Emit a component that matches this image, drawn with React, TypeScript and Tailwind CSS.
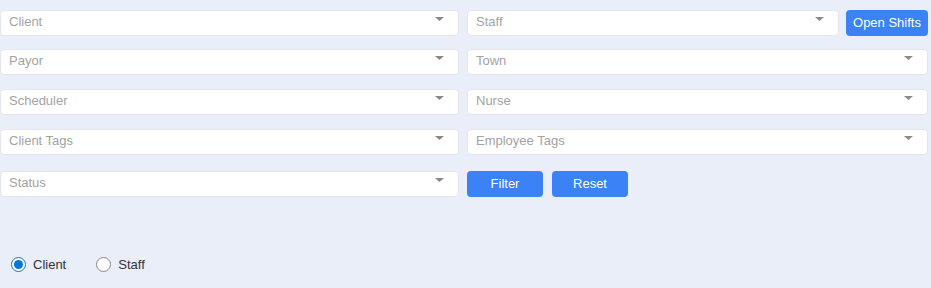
import React, { useState } from 'react';

const Caret = () => (
  <svg width="9" height="4" viewBox="0 0 9 4" className="absolute right-[14px] top-[6px]">
    <path d="M0 0h9L4.5 4z" fill="#8a8a8a" />
  </svg>
);

const SelectBox: React.FC<{ label: string; className?: string }> = ({ label, className = '' }) => (
  <div
    className={`relative h-[26px] bg-white rounded-[4px] border border-[#e3e6ee] flex items-center pl-[8px] pb-[3px] text-[13px] text-[#a3a3a3] ${className}`}
  >
    <span className="leading-none">{label}</span>
    <Caret />
  </div>
);

const BlueButton: React.FC<{ label: string; className?: string }> = ({ label, className = '' }) => (
  <button className={`h-[26px] bg-[#3b82f6] text-white text-[13px] rounded-[4px] flex items-center justify-center pb-[1px] ${className}`}>
    {label}
  </button>
);

export default function App() {
  const [mode, setMode] = useState<'client' | 'staff'>('client');

  return (
    <div className="w-[931px] h-[288px] bg-[#eaeef9] pr-[3px] overflow-hidden" style={{ fontFamily: '"Liberation Sans", Arial, sans-serif' }}>
      <div className="flex gap-[8px] pt-[10px]">
        <SelectBox label="Client" className="w-[459px]" />
        <div className="flex-1 flex gap-[7px]">
          <SelectBox label="Staff" className="flex-1" />
          <BlueButton label="Open Shifts" className="w-[82px]" />
        </div>
      </div>
      <div className="flex gap-[8px] mt-[13px]">
        <SelectBox label="Payor" className="w-[459px]" />
        <SelectBox label="Town" className="flex-1" />
      </div>
      <div className="flex gap-[8px] mt-[14px]">
        <SelectBox label="Scheduler" className="w-[459px]" />
        <SelectBox label="Nurse" className="flex-1" />
      </div>
      <div className="flex gap-[8px] mt-[14px]">
        <SelectBox label="Client Tags" className="w-[459px]" />
        <SelectBox label="Employee Tags" className="flex-1" />
      </div>
      <div className="flex gap-[8px] mt-[16px]">
        <SelectBox label="Status" className="w-[459px]" />
        <div className="flex gap-[9px]">
          <BlueButton label="Filter" className="w-[76px]" />
          <BlueButton label="Reset" className="w-[76px]" />
        </div>
      </div>

      <div className="flex items-center mt-[58px] pl-[11px] text-[13px] text-[#333]">
        <label className="flex items-center gap-[7px] mr-[30px] cursor-pointer">
          <span
            onClick={() => setMode('client')}
            className={`w-[15px] h-[15px] rounded-full border flex items-center justify-center bg-white ${
              mode === 'client' ? 'border-[#0b76d8]' : 'border-[#8a8a8a]'
            }`}
          >
            {mode === 'client' && <span className="w-[9px] h-[9px] rounded-full bg-[#0b76d8]" />}
          </span>
          Client
        </label>
        <label className="flex items-center gap-[7px] cursor-pointer">
          <span
            onClick={() => setMode('staff')}
            className={`w-[15px] h-[15px] rounded-full border flex items-center justify-center bg-white ${
              mode === 'staff' ? 'border-[#0b76d8]' : 'border-[#8a8a8a]'
            }`}
          >
            {mode === 'staff' && <span className="w-[9px] h-[9px] rounded-full bg-[#0b76d8]" />}
          </span>
          Staff
        </label>
      </div>
    </div>
  );
}
